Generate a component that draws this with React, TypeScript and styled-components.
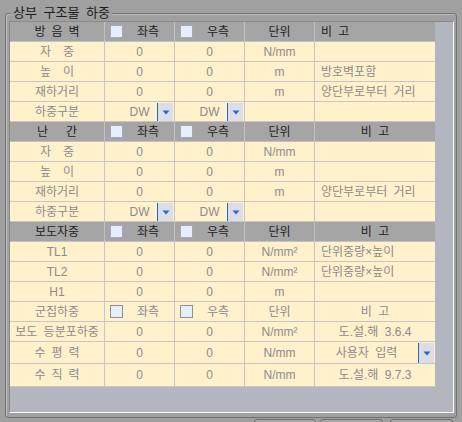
import React from "react";
import styled, { createGlobalStyle } from "styled-components";

const GlobalStyle = createGlobalStyle`
  html, body {
    margin: 0;
    padding: 0;
    background: #a0a0a0;
    overflow: hidden;
  }
  body {
    font-family: "Liberation Sans", "Noto Sans CJK KR", sans-serif;
    font-size: 12px;
  }
  * { box-sizing: border-box; }
`;

const Window = styled.div`
  width: 462px;
  height: 422px;
  padding: 13px 0 0 5px;
`;

const GroupBox = styled.div`
  position: relative;
  width: 452px;
  height: 405px;
  border: 1px solid #727272;
  border-radius: 3px;
  box-shadow: inset 1px 1px 0 #bdbdbd;
  padding: 7px 0 0 3px;
`;

const Legend = styled.div`
  position: absolute;
  top: -9px;
  left: 5px;
  padding: 0 2px;
  background: #a0a0a0;
  color: #1c1c1c;
  font-size: 13px;
  line-height: 16px;
  word-spacing: 3px;
`;

const Panel = styled.div`
  width: 445px;
  height: 392px;
  background: #b4b6bf;
  border-top: 1px solid #8a8a8a;
  border-left: 1px solid #8a8a8a;
  border-right: 1px solid #ffffff;
  border-bottom: 1px solid #ffffff;
`;

const Grid = styled.div`
  display: grid;
  width: 425px;
  grid-template-columns: 95px 70px 70px 70px 120px;
  grid-template-rows: repeat(16, 20px) 22px 23px;
`;

type Align = "center" | "left";

const Cell = styled.div<{ $head?: boolean; $align?: Align; $last?: boolean }>`
  display: flex;
  align-items: center;
  justify-content: ${(p) => (p.$align === "left" ? "flex-start" : "center")};
  padding-left: ${(p) => (p.$align === "left" ? "6px" : "0")};
  background: ${(p) => (p.$head ? "#a5a5a5" : "#fff1cb")};
  color: ${(p) => (p.$head ? "#1e1e1e" : "#8d8b8b")};
  border-bottom: 1px solid ${(p) => (p.$head ? "#c2c2c2" : "#c8c6c0")};
  border-right: ${(p) => (p.$last ? "none" : `1px solid ${p.$head ? "#c2c2c2" : "#c8c6c0"}`)};
  line-height: 1;
  white-space: nowrap;
  word-spacing: 3px;
  overflow: hidden;
`;

const CheckCell = styled(Cell)`
  justify-content: flex-start;
  padding-left: 5px;
`;

const CheckBox = styled.span<{ $dark?: boolean }>`
  flex: none;
  width: 13px;
  height: 13px;
  background: #e7eefb;
  border: 1px solid ${(p) => (p.$dark ? "#8f9099" : "#a3a9b8")};
`;

const CheckLabel = styled.span`
  flex: 1;
  text-align: center;
  padding-right: 1px;
`;

const ComboCell = styled(Cell)`
  justify-content: flex-start;
  align-items: stretch;
  padding: 1px 1px 0 0;
`;

const ComboText = styled.span<{ $pad: number }>`
  flex: 1;
  display: flex;
  align-items: center;
  justify-content: center;
  padding-left: ${(p) => p.$pad}px;
`;

const ComboButton = styled.span`
  flex: none;
  width: 16px;
  display: flex;
  align-items: center;
  justify-content: center;
  background: #dcdde7;
  border-left: 1px solid #1b6cc6;
`;

const BottomBar = styled.div`
  display: flex;
  justify-content: flex-end;
  gap: 4px;
  padding-right: 9px;
  margin-top: 1px;
`;

const BottomButton = styled.div<{ $w: number; $ml?: number }>`
  width: ${(p) => p.$w}px;
  margin-left: ${(p) => p.$ml ?? 0}px;
  height: 24px;
  border: 1px solid #6e6e6e;
  border-radius: 3px;
  background: #a7a7a7;
`;

const Arrow = () => (
  <svg width="8" height="5" viewBox="0 0 8 5">
    <path d="M0.5 0.5 L7.5 0.5 L4 4.5 Z" fill="#1a6fd0" />
  </svg>
);

type CellSpec =
  | { k: "text"; t: string; align?: Align }
  | { k: "check"; t: string; dark?: boolean }
  | { k: "combo"; t: string; pad: number };

const txt = (t: string, align?: Align): CellSpec => ({ k: "text", t, align });

const renderCell = (c: CellSpec, head: boolean, last: boolean, key: number) => {
  if (c.k === "check") {
    return (
      <CheckCell key={key} $head={head} $last={last}>
        <CheckBox $dark={c.dark} />
        <CheckLabel>{c.t}</CheckLabel>
      </CheckCell>
    );
  }
  if (c.k === "combo") {
    return (
      <ComboCell key={key} $head={head} $last={last}>
        <ComboText $pad={c.pad}>{c.t}</ComboText>
        <ComboButton>
          <Arrow />
        </ComboButton>
      </ComboCell>
    );
  }
  return (
    <Cell key={key} $head={head} $align={c.align} $last={last}>
      {c.t}
    </Cell>
  );
};

type RowSpec = { head?: boolean; cells: CellSpec[] };

const header = (title: string, remarkAlign: Align): RowSpec => ({
  head: true,
  cells: [
    txt(title),
    { k: "check", t: "좌측" },
    { k: "check", t: "우측" },
    txt("단위"),
    txt("비 고", remarkAlign),
  ],
});

const SP = "\u2002";

const rows: RowSpec[] = [
  header(`방${SP}음${SP}벽`, "left"),
  { cells: [txt(`자${SP}${SP}중`), txt("0"), txt("0"), txt("N/mm"), txt("")] },
  { cells: [txt(`높${SP}${SP}이`), txt("0"), txt("0"), txt("m"), txt("방호벽포함", "left")] },
  { cells: [txt("재하거리"), txt("0"), txt("0"), txt("m"), txt("양단부로부터 거리", "left")] },
  {
    cells: [
      txt("하중구분"),
      { k: "combo", t: "DW", pad: 17 },
      { k: "combo", t: "DW", pad: 17 },
      txt(""),
      txt(""),
    ],
  },
  header(`난${SP}${SP}${SP}간`, "center"),
  { cells: [txt(`자${SP}${SP}중`), txt("0"), txt("0"), txt("N/mm"), txt("")] },
  { cells: [txt(`높${SP}${SP}이`), txt("0"), txt("0"), txt("m"), txt("")] },
  { cells: [txt("재하거리"), txt("0"), txt("0"), txt("m"), txt("양단부로부터 거리", "left")] },
  {
    cells: [
      txt("하중구분"),
      { k: "combo", t: "DW", pad: 17 },
      { k: "combo", t: "DW", pad: 17 },
      txt(""),
      txt(""),
    ],
  },
  header("보도자중", "center"),
  { cells: [txt("TL1"), txt("0"), txt("0"), txt("N/mm²"), txt("단위중량×높이", "left")] },
  { cells: [txt("TL2"), txt("0"), txt("0"), txt("N/mm²"), txt("단위중량×높이", "left")] },
  { cells: [txt("H1"), txt("0"), txt("0"), txt("m"), txt("")] },
  {
    cells: [
      txt("군집하중"),
      { k: "check", t: "좌측", dark: true },
      { k: "check", t: "우측", dark: true },
      txt("단위"),
      txt("비 고"),
    ],
  },
  { cells: [txt("보도 등분포하중"), txt("0"), txt("0"), txt("N/mm²"), txt("도.설.해 3.6.4")] },
  {
    cells: [
      txt(`수${SP}평${SP}력`),
      txt("0"),
      txt("0"),
      txt("N/mm"),
      { k: "combo", t: "사용자 입력", pad: 0 },
    ],
  },
  { cells: [txt(`수${SP}직${SP}력`), txt("0"), txt("0"), txt("N/mm"), txt("도.설.해 9.7.3")] },
];

export default function App() {
  return (
    <>
      <GlobalStyle />
      <Window>
        <GroupBox>
          <Legend>상부 구조물 하중</Legend>
          <Panel>
            <Grid>
              {rows.map((r, ri) =>
                r.cells.map((c, ci) => renderCell(c, !!r.head, ci === 4, ri * 10 + ci))
              )}
            </Grid>
          </Panel>
        </GroupBox>
        <BottomBar>
          <BottomButton $w={62} />
          <BottomButton $w={63} />
          <BottomButton $w={63} $ml={3} />
        </BottomBar>
      </Window>
    </>
  );
}
